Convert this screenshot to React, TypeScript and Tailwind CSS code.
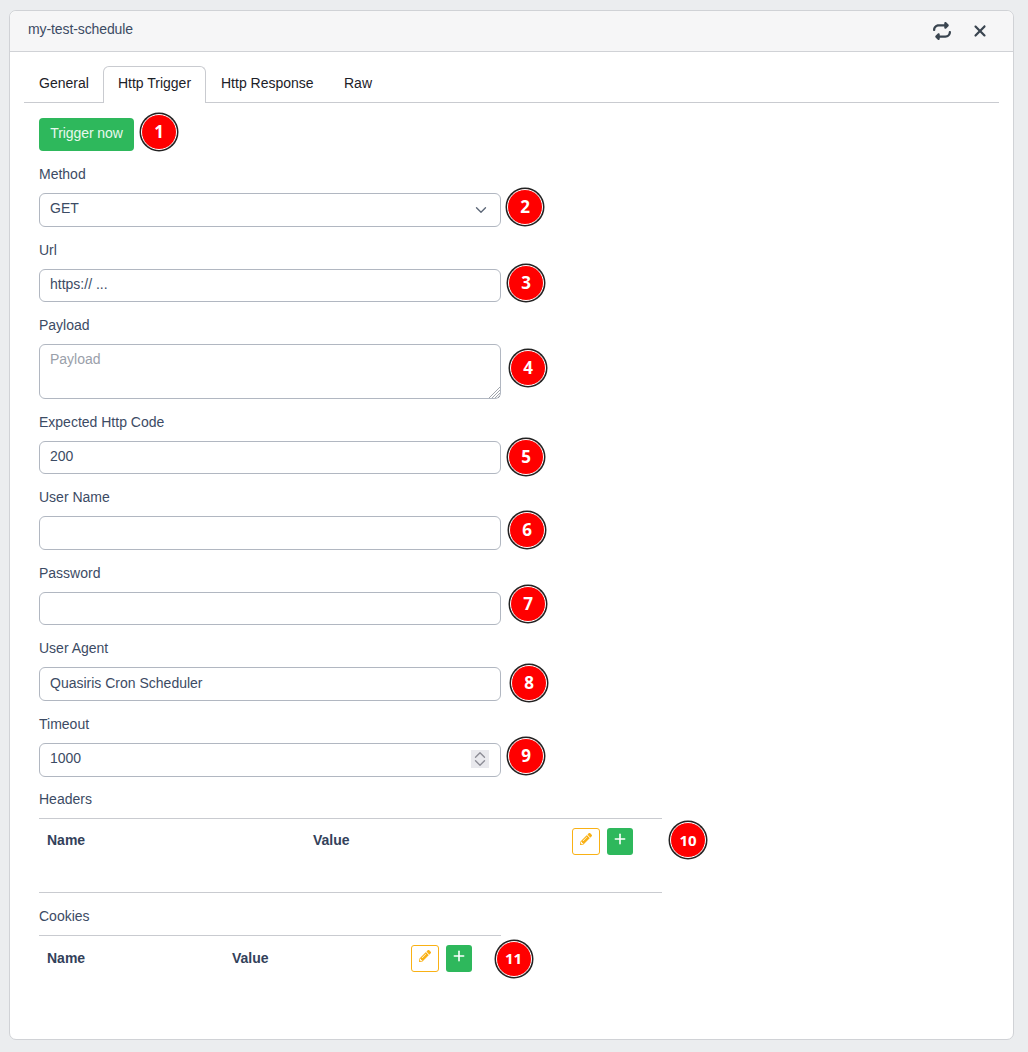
import type { ReactNode } from 'react';
import { ChevronDown, ChevronUp, Plus } from 'lucide-react';
import { FaPencilAlt } from 'react-icons/fa';
import { FaRepeat, FaXmark } from 'react-icons/fa6';

const inputClass =
  'h-[33.6px] w-[462px] rounded-md border border-[#b1b7c1] bg-white pb-[2px] pl-[10px] text-[14px] text-[#3c4b64] outline-none placeholder:text-[#9aa0aa]';

const Badge = ({ n, className }: { n: number; className: string }) => (
  <span
    className={`absolute flex h-[36px] w-[36px] items-center justify-center rounded-full border-[1.5px] border-white bg-[#ff0000] font-bold text-white shadow-[0_0_0_1.5px_#222] [font-family:'Open_Sans',sans-serif] ${className}`}
  >
    {n}
  </span>
);

const Field = ({ label, children }: { label: string; children: ReactNode }) => (
  <div className="mb-[13px]">
    <label className="mb-2 block text-[14px] leading-[21px] text-[#3c4b64]">{label}</label>
    {children}
  </div>
);

const KeyValueTable = ({ cols, width, labelClass }: { cols: string; width: string; labelClass: string }) => (
  <div className={`${cols} ${width} grid items-start border-t border-[#c9cbd0] px-2 pt-[9px] text-[14px] font-bold text-[#33415a]`}>
    <span className={labelClass}>Name</span>
    <span className={labelClass}>Value</span>
    <div className="flex gap-[7px]">
      <button className="flex h-[27px] w-[28px] items-center justify-center rounded-[3px] border border-[#f9b115] bg-white pb-[4px] text-[#f9b115]">
        <FaPencilAlt size={12} />
      </button>
      <button className="flex h-[27px] w-[26px] items-center justify-center rounded-[3px] bg-[#2eb85c] pb-[5px] text-white">
        <Plus size={16} strokeWidth={2.4} />
      </button>
    </div>
  </div>
);

export default function App() {
  return (
    <div className="h-[1052px] w-[1028px] bg-[#ebedef] px-[9px] pt-[10px] [font-family:'Liberation_Sans',Arial,sans-serif]">
      <div className="relative h-[1030px] w-[1005px] rounded-[7px] border border-[#d0d2d6] bg-white">
        <div className="flex h-[41px] items-center justify-between rounded-t-[7px] border-b border-[#d0d2d6] bg-[#f6f6f7] pl-[18px] pr-[24px]">
          <span className="pb-[3px] text-[14px] tracking-[-0.1px] text-[#3c4b64]">my-test-schedule</span>
          <div className="flex items-center gap-[20px] text-[#3a4550]">
            <FaRepeat size={18} />
            <FaXmark size={18} />
          </div>
        </div>

        <div className="px-[14px] pt-[14px]">
          <div className="flex h-[37px] items-end border-b border-[#c9cbd0] text-[14px] text-[#1c2128]">
            <a className="flex h-[36px] w-[79px] items-center pb-[2px] pl-[15px]">General</a>
            <a className="mb-[-1px] flex h-[37px] w-[103px] items-center justify-center rounded-t-md border border-b-0 border-[#c9cbd0] bg-white pb-[4px]">
              Http Trigger
            </a>
            <a className="flex h-[36px] w-[123px] items-center pb-[2px] pl-[15px]">Http Response</a>
            <a className="flex h-[36px] items-center pb-[2px] pl-[15px]">Raw</a>
          </div>

          <div className="px-[15px] pt-[15px]">
            <button className="mb-[13px] h-[33px] w-[95px] rounded-[4px] bg-[#2eb85c] pb-[2px] text-[14px] tracking-[-0.1px] text-[#e8f8ee]">Trigger now</button>

            <Field label="Method">
              <div className={`${inputClass} flex items-center justify-between pr-[10px]`}>
                <span>GET</span>
                <ChevronDown size={18} strokeWidth={1.8} className="mt-[2px] text-[#5d6778]" />
              </div>
            </Field>
            <Field label="Url">
              <input className={inputClass} defaultValue="https:// ..." />
            </Field>
            <Field label="Payload">
              <div className="relative h-[54.4px] w-[462px]">
                <textarea className={`${inputClass} block h-[54.4px] resize-none pt-[4px]`} placeholder="Payload" />
                <svg className="absolute bottom-[1px] right-[1px]" width="11" height="11" viewBox="0 0 11 11" stroke="#8a8f98" strokeWidth="0.8">
                  <path d="M0 11 11 0M3 11l8-8M6 11l5-5M9 11l2-2" />
                </svg>
              </div>
            </Field>
            <Field label="Expected Http Code">
              <input className={inputClass} defaultValue="200" />
            </Field>
            <Field label="User Name">
              <input className={inputClass} />
            </Field>
            <Field label="Password">
              <input className={inputClass} />
            </Field>
            <Field label="User Agent">
              <input className={inputClass} defaultValue="Quasiris Cron Scheduler" />
            </Field>
            <Field label="Timeout">
              <div className={`${inputClass} flex items-center justify-between pr-[11px]`}>
                <span>1000</span>
                <span className="flex h-[18px] w-[18px] flex-col items-center justify-center bg-[#e9e9ed] text-[#8d8d96]">
                  <span className="flex h-[8px] items-center">
                    <ChevronUp size={18} strokeWidth={1.8} />
                  </span>
                  <span className="flex h-[8px] items-center">
                    <ChevronDown size={18} strokeWidth={1.8} />
                  </span>
                </span>
              </div>
            </Field>

            <div className="mb-[8px] mt-[-0.6px] text-[14px] leading-[21px] text-[#3c4b64]">Headers</div>
            <KeyValueTable cols="grid-cols-[266px_259px_1fr]" width="h-[75px] w-[623px] border-b" labelClass="pt-[2px]" />

            <div className="mb-[8px] mt-[13px] text-[14px] leading-[21px] text-[#3c4b64]">Cookies</div>
            <KeyValueTable cols="grid-cols-[185px_179px_1fr]" width="w-[462px]" labelClass="pt-[3px]" />
          </div>
        </div>

        <Badge n={1} className="left-[131px] top-[103px] text-[17px]" />
        <Badge n={2} className="left-[497px] top-[177.5px] text-[17px]" />
        <Badge n={3} className="left-[498px] top-[254px] text-[17px]" />
        <Badge n={4} className="left-[500px] top-[339px] text-[17px]" />
        <Badge n={5} className="left-[498px] top-[428px] text-[17px]" />
        <Badge n={6} className="left-[499px] top-[501px] text-[17px]" />
        <Badge n={7} className="left-[500px] top-[575px] text-[17px]" />
        <Badge n={8} className="left-[501px] top-[654px] text-[17px]" />
        <Badge n={9} className="left-[498px] top-[727px] text-[17px]" />
        <Badge n={10} className="left-[660px] top-[811px] text-[15px]" />
        <Badge n={11} className="left-[485.5px] top-[929.5px] text-[15px]" />
      </div>
    </div>
  );
}
